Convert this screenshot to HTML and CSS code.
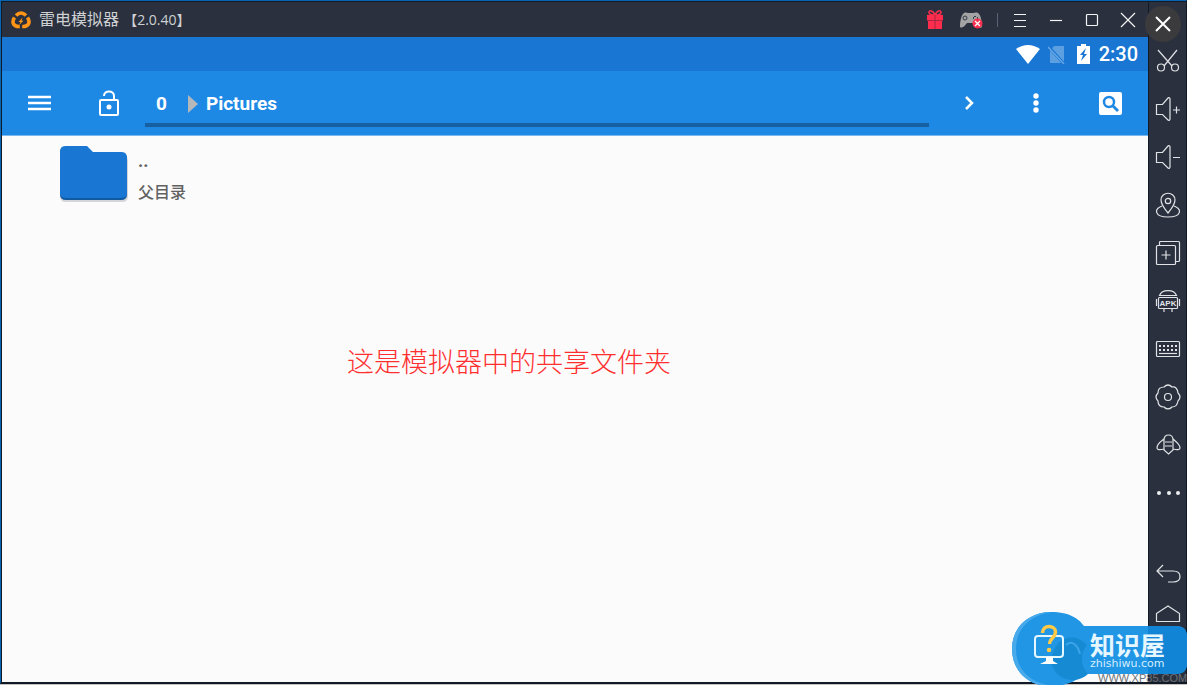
FILE: index.html
```html
<!DOCTYPE html>
<html lang="zh-CN">
<head>
<meta charset="utf-8">
<meta name="viewport" content="width=device-width, initial-scale=1">
<title>雷电模拟器</title>
<link rel="stylesheet" href="styles.css">
</head>
<body>
<div class="window">
  <div class="main">
    <header class="titlebar">
      <svg class="logo" width="20" height="18" viewBox="0 0 20 18"><g fill="none" stroke="#ff9416" stroke-width="3.600"><path d="M5 4.500Q10-.5 15 4.500"/><path d="M3.500 6.500C0 12 3 16 8.800 15.500"/><path d="M16.500 6.500C20 12 17 16 11.200 15.500"/></g><path d="M11.500 6.500 7.500 11h2L8.200 14 12.500 9.700h-2z" fill="#ff9416"/></svg>
      <h1 class="title">雷电模拟器 <span class="version">【2.0.40】</span></h1>
      <div class="window-tools">
        <button class="tool" aria-label="礼包"><svg width="18" height="20" viewBox="0 0 18 20"><path d="M1 5h16v5H1zM2 11h14v8H2z" fill="#ff2d4d"/><path d="M9 5C7 0 3 0 3 2.500S6 5 9 5c3 0 6 0 6-2.500S11 0 9 5z" fill="none" stroke="#ff2d4d" stroke-width="1.500"/><path d="M9 5v14M1 10.500h16" stroke="#a32942"/></svg></button>
        <button class="tool" aria-label="手柄"><svg width="24" height="18" viewBox="0 0 24 18"><path d="M5 2c2-1 3 0 4 0h5c2 0 3-1 5 0 3 2 4 9 4 14-2 2-4 0-7-4H8c-2 2-4 6-7 4C1 11 2 4 5 2z" fill="#a3a3a3"/><circle cx="6" cy="7" r="2" fill="none" stroke="#333a48"/><path d="M16 5v1m-2 1h1m3 0h1" stroke="#333a48" stroke-width="2"/><circle cx="18.500" cy="12.500" r="5" fill="#f72f4c"/><path d="m16 10 5 5m0-5-5 5" stroke="#fff" stroke-width="1.300"/></svg></button>
        <span class="divider"></span>
        <button class="tool" aria-label="菜单"><svg width="14" height="14" viewBox="0 0 14 14"><path d="M1 1.500h12M1 7.500h12M1 13.500h12" class="line"/></svg></button>
        <button class="tool" aria-label="最小化"><svg width="14" height="14" viewBox="0 0 14 14"><path d="M1 7.500h12" class="line"/></svg></button>
        <button class="tool" aria-label="最大化"><svg width="14" height="14" viewBox="0 0 14 14"><rect x="1.500" y="1.500" width="11" height="11" rx="1" class="line"/></svg></button>
        <button class="tool" aria-label="关闭"><svg width="16" height="16" viewBox="0 0 16 16"><path d="m1 1 14 14m0-14L1 15" class="line"/></svg></button>
      </div>
    </header>
    <div class="statusbar">
      <svg width="24" height="19" viewBox="0 0 24 19"><path d="M0 4Q12-4 24 4L12 19z" fill="#fff"/></svg>
      <svg class="sim" width="17" height="19" viewBox="0 0 17 19"><path d="M6 1h10v17H2V6z" fill="#5da0e2"/><path d="m0 1 16 18" stroke="#1976d2" stroke-width="3"/><path d="m0 2 16 17" stroke="#68a7e5" stroke-width="1.500"/></svg>
      <svg class="battery" width="13" height="20" viewBox="0 0 13 20"><path d="M4 0h5v2h4v18H0V2h4z" fill="#fff"/><path d="M9 4 3 11h3l-2 6 6-7H7l2-6z" fill="#1976d2"/></svg>
      <time class="clock">2:30</time>
    </div>
    <nav class="toolbar">
      <button class="action menu" aria-label="菜单"><svg width="23" height="16" viewBox="0 0 23 16"><path d="M0 2h23M0 8h23M0 14h23" stroke="#fff" stroke-width="2.500"/></svg></button>
      <button class="action lock" aria-label="锁定"><svg width="20" height="26" viewBox="0 0 20 26" fill="none" stroke="#fff" stroke-width="2"><rect x="1" y="10" width="18" height="15" rx="1"/><path d="M5 6C5 0 15 0 15 6v4"/><circle cx="10" cy="17" r="2.500" fill="#fff" stroke="none"/></svg></button>
      <div class="path">
        <a class="crumb" href="#">0</a>
        <svg class="arrow" width="10" height="18" viewBox="0 0 10 18"><path d="m0 0 10 9L0 18z" fill="#b5b8bb"/></svg>
        <a class="crumb" href="#">Pictures</a>
      </div>
      <button class="action next" aria-label="前进"><svg width="10" height="14" viewBox="0 0 10 14"><path d="m2 1 6 6-6 6" fill="none" stroke="#fff" stroke-width="2.500"/></svg></button>
      <button class="action more" aria-label="更多"><svg width="6" height="20" viewBox="0 0 6 20" fill="#fff"><circle cx="3" cy="3" r="2.700"/><circle cx="3" cy="10" r="2.700"/><circle cx="3" cy="17" r="2.700"/></svg></button>
      <button class="action search" aria-label="搜索"><svg width="23" height="23" viewBox="0 0 23 23"><rect width="23" height="23" rx="2" fill="#fff"/><circle cx="10" cy="10" r="5" fill="none" stroke="#1e88e5" stroke-width="2.500"/><path d="m13.500 13.500 5.500 5.500" stroke="#1e88e5" stroke-width="2.800"/></svg></button>
    </nav>
    <main class="content">
      <a class="entry" href="#">
        <svg class="folder" width="70" height="58" viewBox="0 0 70 58"><path d="M6 3h23l7 7h27q6 0 6 6v35q0 6-6 6H7q-6 0-6-6V9q0-6 5-6z" fill="#d3d5d8"/><path d="M6 2h22l6 6h29q5 0 5 6v35q0 6-6 6H7q-6 0-6-6V8q0-6 5-6z" fill="#125aa0"/><path d="M6 1h22l6 6h29q5 0 5 6v35q0 5-6 5H7q-6 0-6-5V7q0-6 5-6z" fill="#1976d2"/></svg>
        <span class="entry-text"><span class="name">..</span><span class="kind">父目录</span></span>
      </a>
      <p class="note">这是模拟器中的共享文件夹</p>
    </main>
  </div>
  <aside class="sidebar">
    <button class="side" aria-label="截图"><svg width="24" height="24" viewBox="0 0 24 24"><path d="m2 1 14 16M21 1 8 17"/><circle cx="5" cy="18.500" r="3.500"/><circle cx="19" cy="18.500" r="3.500"/></svg></button>
    <button class="side" aria-label="增大音量"><svg width="26" height="24" viewBox="0 0 26 24"><path d="M1.500 7.500h6L13 1c1-1 2 0 2 1v20c0 1-1 2-2 1l-5.500-5.500h-6zM18 13h7m-3.500-3.500v7"/></svg></button>
    <button class="side" aria-label="减小音量"><svg width="26" height="24" viewBox="0 0 26 24"><path d="M1.500 7.500h6L13 1c1-1 2 0 2 1v20c0 1-1 2-2 1l-5.500-5.500h-6zM18 12.500h7"/></svg></button>
    <button class="side" aria-label="定位"><svg width="26" height="26" viewBox="0 0 26 26"><path d="M13 21C8 15 6 11 6 8c0-9 14-9 14 0 0 3-2 7-7 13zM7 14c-8 3-8 11 6 11s14-8 6-11"/><circle cx="13" cy="9" r="2.700"/></svg></button>
    <button class="side" aria-label="多开"><svg width="26" height="26" viewBox="0 0 26 26"><rect x="1.500" y="5.500" width="19" height="19" rx="1"/><path d="M4.500 5V2.500q0-1 1-1h18q1 0 1 1v18q0 1-1 1H21M6.500 15h9M11 10.500v9"/></svg></button>
    <button class="side" aria-label="安装 APK"><svg width="26" height="26" viewBox="0 0 26 26"><rect x="3.500" y="9.500" width="19" height="11" rx="1"/><path d="M4.500 7.500C7 1 19 1 21.500 7.500zM1.500 11v7m23-7v7M9 21v3m8-3v3"/><text class="apk" x="13" y="18">APK</text></svg></button>
    <button class="side" aria-label="键盘"><svg width="26" height="18" viewBox="0 0 26 18"><rect x="1.500" y="1.500" width="23" height="15" rx="1"/><path d="M4 6h18M4 10h18" stroke-width="2" stroke-dasharray="2"/><path d="M4 13.500h18"/></svg></button>
    <button class="side" aria-label="设置"><svg width="26" height="26" viewBox="0 0 26 26"><path d="M9 3Q13-1 17 3q5-1 6 6 4 4 0 8-1 6-6 6-4 4-8 0-6 0-6-6-4-4 0-8 0-6 6-6z"/><circle cx="13" cy="13" r="3.500"/></svg></button>
    <button class="side" aria-label="助手"><svg width="26" height="22" viewBox="0 0 26 22"><path d="M9 16V6q0-5 4.500-5T18 6v10l-4.500 4zM9 5C7 7 2 9 2 14c0 2 3 2 7 1m9-10c2 2 7 5 7 9 0 2-3 2-7 1M10 8h7m-7 4h7"/></svg></button>
    <button class="side" aria-label="更多"><svg class="dots" width="26" height="6" viewBox="0 0 26 6"><circle cx="4" cy="3" r="2"/><circle cx="14" cy="3" r="2"/><circle cx="23" cy="3" r="2"/></svg></button>
    <button class="side back" aria-label="返回"><svg width="26" height="20" viewBox="0 0 26 20"><path d="m8 1-6 6 6 6M2 7h16q7 0 7 5.500T18 18h-5"/></svg></button>
    <button class="side home" aria-label="主页"><svg width="26" height="18" viewBox="0 0 26 18"><path d="M1.500 8.500 13 1l11.500 7.500v8h-23z"/></svg></button>
  </aside>
</div>
<button class="close-round" aria-label="关闭图片"><svg width="16" height="16" viewBox="0 0 16 16"><path d="m1 1 14 14m0-14L1 15" stroke="#fff" stroke-width="2"/></svg></button>
<div class="mark">
  <svg class="mark-shape" width="175" height="73" viewBox="0 0 175 73"><path d="M39 0C58 0 67 7 72 14h92q11 0 11 11v26q0 11-11 11H70C65 69 56 73 43 74 18 76 0 60 0 37S18 0 39 0z" fill="#2196e5"/><path d="M39 0C18 0 0 14 0 37s18 39 43 37C20 72 4 59 4 37S20 3 39 0z" fill="#48aaeb"/><path d="M136 14h28q11 0 11 11v26q0 11-11 11h-28z" fill="#1284d5"/><path d="M39 50c3-27 24-30 36-17-7 9-7 20 1 29-13 12-34 5-37-12z" fill="#168bd4"/><path d="M54 33c6-6 12 1 14 9" fill="none" stroke="#3ba4e9" stroke-width="2"/><rect x="23" y="24" width="28" height="21" rx="3" fill="none" stroke="#e5f7ff" stroke-width="2"/><path d="M34 45h7v4l5 3H28l6-3z" fill="#fff"/><path d="M30.500 21c0-9 13-8 13-1 0 6-6 6-6 12" fill="none" stroke="#ffca45" stroke-width="3.500"/><circle cx="37" cy="38" r="2.200" fill="#ffca45"/></svg>
  <span class="mark-name">知识屋</span>
  <span class="mark-site">zhishiwu.com</span>
  <span class="mark-under">WWW.XP85.COM</span>
</div>
</body>
</html>
```
FILE: styles.css
```css
* { box-sizing: border-box; }
body {
  margin: 0;
  font-family: "Noto Sans", "Noto Sans CJK SC", sans-serif;
  background: #c9c3c0;
  overflow: hidden;
}
button {
  display: flex;
  align-items: center;
  justify-content: center;
  padding: 0;
  border: 0;
  background: none;
}
a { color: inherit; text-decoration: none; }
svg { flex: none; display: block; }
.window {
  display: flex;
  min-height: calc(100vh - 1px);
  border: 1px solid #0a64b4;
  border-right-color: #0d1828;
  border-bottom: 2px solid #111a27;
}
.main {
  flex: 1;
  display: flex;
  flex-direction: column;
  border-top: 1px solid #111a27;
  border-left: 1px solid #111a27;
}
.titlebar {
  display: flex;
  align-items: center;
  height: 35px;
  padding-left: 9px;
  background: #2a303e;
}
.title {
  margin: 0 0 0 8px;
  font: 400 16px/24px "Open Sans", "Noto Sans CJK SC", sans-serif;
  color: #cfd0d2;
  white-space: pre;
}
.version { font-size: 14px; }
.window-tools { display: flex; align-items: center; margin-left: auto; padding-right: 2px; }
.tool { width: 36px; height: 34px; }
.divider { width: 1px; height: 14px; margin: 0 4px 0 8px; background: #596276; }
.line { fill: none; stroke: #f4f4f4; stroke-width: 1.2; }
.statusbar {
  display: flex;
  align-items: center;
  justify-content: flex-end;
  height: 34px;
  padding-right: 10px;
  background: #1976d2;
}
.sim { margin-left: 8px; }
.battery { margin-left: 12px; }
.clock { margin-left: 9px; font: 500 20px/24px Roboto, sans-serif; color: #fff; }
.toolbar {
  display: flex;
  align-items: center;
  height: 65px;
  border-bottom: 1px solid #7bb8ef;
  background: #1e88e5;
  color: #fff;
}
.action { height: 48px; }
.menu { width: 75px; }
.lock { width: 64px; }
.path {
  flex: 1;
  display: flex;
  align-items: center;
  height: 48px;
  margin-left: 4px;
  padding: 6px 11px 0;
  border-bottom: 4px solid #1660a2;
}
.crumb { font: 700 19px/24px Roboto, sans-serif; }
.arrow { margin: 0 8px 0 21px; }
.next { width: 69px; padding-left: 10px; }
.more { width: 75px; }
.search { width: 75px; }
.content { flex: 1; background: #fbfbfb; }
.entry { display: flex; padding: 9px 57px 0; color: #616161; }
.entry-text { display: flex; flex-direction: column; padding-left: 9px; }
.name { font: 700 18px/32px Roboto, sans-serif; }
.kind { font: 500 16px/28px "Noto Sans CJK SC", sans-serif; }
.note {
  margin: 136px 0 0 345px;
  font: 300 27px/40px "Noto Sans CJK SC", sans-serif;
  color: #ff2f2f;
}
.sidebar {
  display: flex;
  flex-direction: column;
  width: 38px;
  padding: 35px 0 48px;
  border-top: 1px solid #111a27;
  border-left: 1px solid #111a27;
  background: #2a303e;
}
.side { height: 48px; }
.side svg { fill: none; stroke: #e0e2e5; stroke-width: 1.2; }
.side .dots { fill: #eceef0; stroke: none; }
.side .apk {
  font: 700 8px "Liberation Sans", sans-serif;
  text-anchor: middle;
  fill: #e0e2e5;
  stroke: none;
}
.back { height: 40px; margin-top: auto; }
.home { height: 40px; }
.close-round {
  position: absolute;
  top: 6px;
  right: 6px;
  width: 36px;
  height: 36px;
  border-radius: 50%;
  background: #3b3b3d;
}
.mark {
  position: absolute;
  right: 0;
  bottom: 0;
  width: 175px;
  height: 73px;
  overflow: hidden;
  white-space: nowrap;
}
.mark span { position: absolute; left: 78px; }
.mark .mark-name { top: 19px; font: 700 25px/26px "Noto Sans CJK SC", sans-serif; color: #e7f7ff; }
.mark .mark-site { top: 45px; font: 400 11px/14px "DejaVu Sans", sans-serif; color: #d4eeff; }
.mark .mark-under { left: 86px; top: 60px; font: 400 11px/12px "Liberation Sans", sans-serif; color: #6d7178; }
```
